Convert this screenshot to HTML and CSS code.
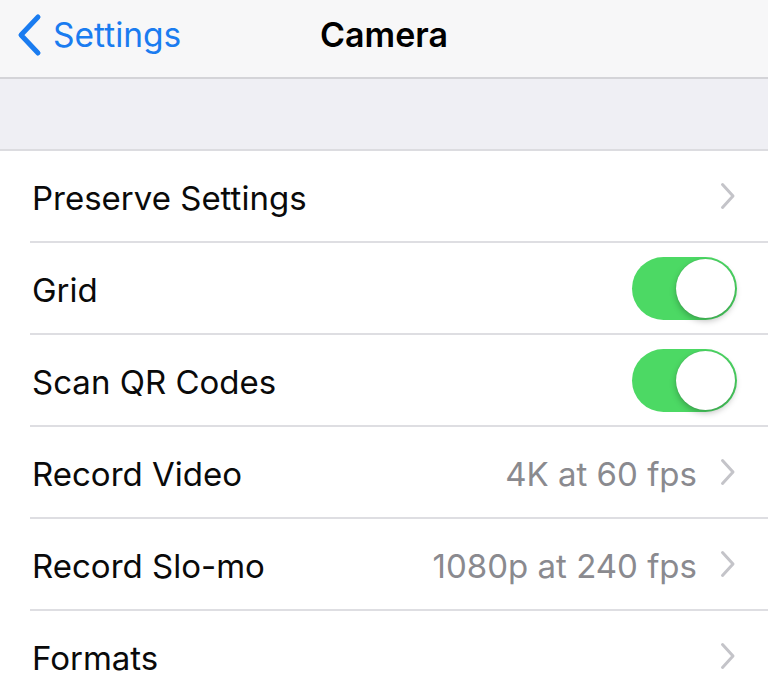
FILE: index.html
```html
<!DOCTYPE html>
<html>
<head>
<meta charset="utf-8">
<link rel="stylesheet" href="styles.css">
</head>
<body>
<div class="screen">
  <header class="navbar">
    <div class="back">
      <svg class="back-chev" width="26" height="44" viewBox="0 0 26 44"><path d="M22 4 L5 22 L22 40" fill="none" stroke="#1a7cf0" stroke-width="5" stroke-linecap="round" stroke-linejoin="round"/></svg>
      <span>Settings</span>
    </div>
    <div class="title">Camera</div>
  </header>
  <div class="spacer"></div>
  <ul class="list">
    <li class="row"><span class="label">Preserve Settings</span><span class="right"><svg class="chev" width="16" height="28" viewBox="0 0 16 28"><path d="M2.5 2.5 L13 14 L2.5 25.5" fill="none" stroke="#c4c4c9" stroke-width="3" stroke-linecap="round" stroke-linejoin="round"/></svg></span></li>
    <li class="row"><span class="label">Grid</span><span class="right"><span class="toggle"><span class="knob"></span></span></span></li>
    <li class="row"><span class="label">Scan QR Codes</span><span class="right"><span class="toggle"><span class="knob"></span></span></span></li>
    <li class="row"><span class="label">Record Video</span><span class="right"><span class="value">4K at 60 fps</span><svg class="chev" width="16" height="28" viewBox="0 0 16 28"><path d="M2.5 2.5 L13 14 L2.5 25.5" fill="none" stroke="#c4c4c9" stroke-width="3" stroke-linecap="round" stroke-linejoin="round"/></svg></span></li>
    <li class="row"><span class="label">Record Slo-mo</span><span class="right"><span class="value">1080p at 240 fps</span><svg class="chev" width="16" height="28" viewBox="0 0 16 28"><path d="M2.5 2.5 L13 14 L2.5 25.5" fill="none" stroke="#c4c4c9" stroke-width="3" stroke-linecap="round" stroke-linejoin="round"/></svg></span></li>
    <li class="row"><span class="label">Formats</span><span class="right"><svg class="chev" width="16" height="28" viewBox="0 0 16 28"><path d="M2.5 2.5 L13 14 L2.5 25.5" fill="none" stroke="#c4c4c9" stroke-width="3" stroke-linecap="round" stroke-linejoin="round"/></svg></span></li>
  </ul>
</div>
</body>
</html>
```
FILE: styles.css
```css
* { box-sizing: border-box; }
html, body { margin: 0; padding: 0; }
body {
  width: 768px;
  height: 699px;
  overflow: hidden;
  font-family: "Inter", "Liberation Sans", sans-serif;
  background: #ffffff;
  color: #000;
}
.navbar {
  height: 79px;
  background: #f7f7f8;
  border-bottom: 2px solid #d4d4d8;
  display: flex;
  align-items: center;
  position: relative;
}
.back {
  display: flex;
  align-items: center;
  gap: 11px;
  padding-left: 16px;
  color: #1a7cf0;
  font-size: 33.5px;
  padding-bottom: 8px;
}
.back-chev { display: block; }
.title {
  position: absolute;
  left: 0;
  right: 0;
  top: 0;
  height: 69px;
  display: flex;
  align-items: center;
  justify-content: center;
  font-size: 34px;
  font-weight: 600;
  pointer-events: none;
}
.spacer {
  height: 72px;
  background: #efeff4;
  border-bottom: 2px solid #dcdce0;
}
.list {
  list-style: none;
  margin: 0;
  padding: 0 0 0 30px;
  background: #fff;
}
.row {
  height: 92px;
  display: flex;
  align-items: center;
  justify-content: space-between;
  border-bottom: 2px solid #dedee2;
  padding-left: 2px;
  padding-right: 30px;
}
.label {
  font-size: 33px;
  color: #0a0a0a;
  padding-top: 3px;
}
.right {
  display: flex;
  align-items: center;
}
.value {
  font-size: 33px;
  color: #8a8a8f;
  margin-right: 23px;
  padding-top: 3px;
}
.chev {
  display: block;
  margin-right: 2px;
}
.toggle {
  width: 105px;
  height: 63px;
  border-radius: 32px;
  background: #4cd964;
  position: relative;
  margin-right: 1px;
}
.knob {
  position: absolute;
  right: 2px;
  top: 2px;
  width: 59px;
  height: 59px;
  border-radius: 50%;
  background: #fff;
  box-shadow: 0 3px 6px rgba(0,0,0,0.25), 0 0 1px rgba(0,0,0,0.2);
}
```
